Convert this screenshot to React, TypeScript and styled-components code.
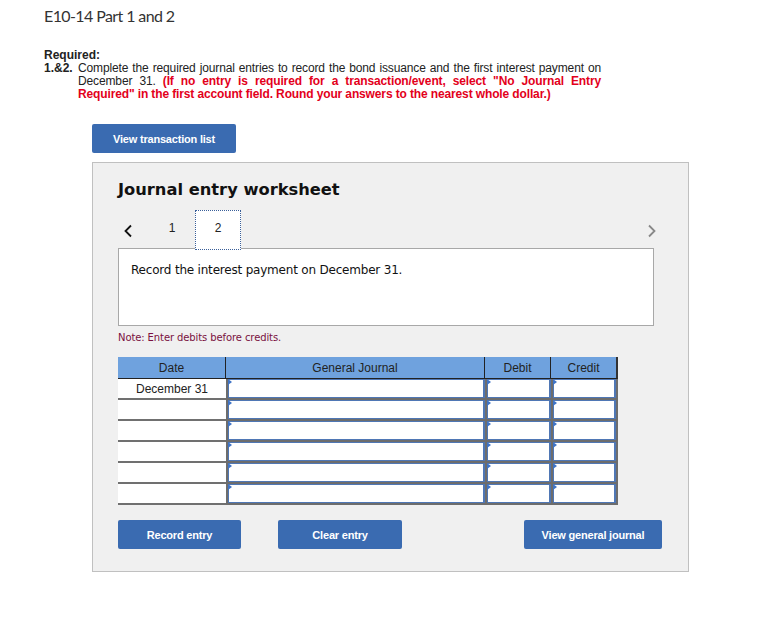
import React from "react";
import styled, { createGlobalStyle } from "styled-components";

const Global = createGlobalStyle`
  html, body { margin: 0; padding: 0; background: #fff; }
  body { font-family: "Liberation Sans", Arial, sans-serif; color: #222; }
  * { box-sizing: border-box; }
`;

const Page = styled.div`
  padding: 6px 0 40px 44px;
  width: 761px;
`;

const Title = styled.h1`
  margin: 0;
  font-family: Lato, "Open Sans", sans-serif;
  font-weight: 400;
  font-size: 16px;
  line-height: 20px;
  color: #333;
  letter-spacing: -0.6px;
`;

const Required = styled.div`
  margin-top: 23px;
  font-size: 12px;
  line-height: 13px;
  width: 557px;
`;

const ReqLabel = styled.div`
  font-weight: 700;
`;

const ReqRow = styled.div`
  display: flex;
`;

const ReqNum = styled.div`
  font-weight: 700;
  width: 34px;
  flex: none;
`;

const ReqText = styled.div`
  text-align: justify;
  flex: 1;
  letter-spacing: -0.13px;
`;

const Red = styled.span`
  color: #e3001b;
  font-weight: 700;
`;

const Btn = styled.button<{ $w: number }>`
  width: ${(p) => p.$w}px;
  height: 29px;
  background: #3a6bb1;
  border: none;
  border-radius: 2px;
  color: #fff;
  font-family: "Liberation Sans", Arial, sans-serif;
  font-weight: 700;
  font-size: 11px;
  letter-spacing: -0.2px;
  padding: 0;
  cursor: pointer;
  display: block;
`;

const TopBtnWrap = styled.div`
  margin: 23px 0 0 48px;
`;

const Panel = styled.div`
  margin: 9px 0 0 48px;
  width: 597px;
  height: 410px;
  background: #f0f0f0;
  border: 1px solid #c0c0c0;
  padding: 17px 35px 0 25px;
`;

const PanelTitle = styled.h2`
  margin: 0;
  font-family: "DejaVu Sans", Verdana, sans-serif;
  font-weight: 700;
  font-size: 16.3px;
  line-height: 20px;
  color: #111;
`;

const Nav = styled.div`
  display: flex;
  align-items: flex-end;
  margin-top: 10px;
  margin-right: -9px;
  height: 40px;
  position: relative;
  z-index: 1;
  margin-bottom: -2px;
`;

const Arrow = styled.div<{ $gray?: boolean }>`
  width: 20px;
  height: 38px;
  display: flex;
  align-items: center;
  justify-content: center;
  color: ${(p) => (p.$gray ? "#888" : "#111")};
`;

const Gap = styled.div<{ $w: number }>`
  width: ${(p) => p.$w}px;
  flex: none;
`;

const TabNum = styled.div<{ $active?: boolean }>`
  width: ${(p) => (p.$active ? 46 : 43)}px;
  height: 40px;
  display: flex;
  align-items: center;
  justify-content: center;
  font-family: "Liberation Sans", Arial, sans-serif;
  font-size: 12px;
  color: #222;
  padding-bottom: 4px;
  padding-right: ${(p) => (p.$active ? 0 : 3)}px;
  background: ${(p) => (p.$active ? "#fff" : "transparent")};
  border: ${(p) => (p.$active ? "1px dotted #3a5f99" : "none")};
`;

const Spacer = styled.div`
  flex: 1;
`;

const ContentBox = styled.div`
  width: 536px;
  height: 78px;
  background: #fff;
  border: 1px solid #a8a8a8;
  padding: 13px 12px;
  font-family: "DejaVu Sans", Verdana, sans-serif;
  font-size: 12px;
  line-height: 16px;
  color: #111;
  letter-spacing: -0.2px;
`;

const Note = styled.div`
  margin-top: 6px;
  font-family: "DejaVu Sans", Verdana, sans-serif;
  font-size: 10px;
  line-height: 12px;
  color: #7a1040;
  letter-spacing: -0.1px;
`;

const Table = styled.div`
  margin-top: 13px;
  display: grid;
  grid-template-columns: 108px 259px 66px 67px;
  width: 500px;
`;

const Head = styled.div<{ $last?: boolean }>`
  height: 22px;
  background: #6fa2de;
  border-bottom: 1px solid #222;
  border-right: ${(p) => (p.$last ? "2px solid #333" : "1px solid #222")};
  display: flex;
  align-items: center;
  justify-content: center;
  font-size: 12px;
  color: #222;
`;

const DateCell = styled.div`
  height: 21px;
  background: #fff;
  border-bottom: 2px solid #707070;
  display: flex;
  align-items: center;
  justify-content: center;
  font-size: 12px;
  color: #222;
`;

const InCell = styled.div<{ $last?: boolean }>`
  height: 21px;
  border-left: 2px solid #6d6d6d;
  border-right: ${(p) => (p.$last ? "2px solid #6d6d6d" : "none")};
  border-bottom: 2px solid #6d6d6d;
  position: relative;
  background: #fff;
`;

const Field = styled.div`
  position: absolute;
  inset: 0;
  border: 2px solid #4f77b5;
  border-top-width: 1px;
  border-left-width: 1px;
  border-bottom-width: 1px;
  background: #fff;
`;

const Marker = styled.span`
  position: absolute;
  left: 0;
  top: 0;
  width: 0;
  height: 0;
  border-top: 3px solid transparent;
  border-bottom: 3px solid transparent;
  border-left: 4px solid #3f74c6;
`;

const BtnRow = styled.div`
  display: flex;
  margin-top: 15px;
  margin-right: -9px;
`;

const GapBtn = styled.div<{ $ml: string }>`
  margin-left: ${(p) => p.$ml};
`;

const Chevron = ({ dir }: { dir: "l" | "r" }) => (
  <svg width="10" height="14" viewBox="0 0 10 14">
    <path
      d={dir === "l" ? "M8 1.5 L2.5 7 L8 12.5" : "M2 1.5 L7.5 7 L2 12.5"}
      fill="none"
      stroke="currentColor"
      strokeWidth="1.8"
    />
  </svg>
);

const rows = ["December 31", "", "", "", "", ""];

export default function App() {
  return (
    <>
      <Global />
      <Page>
        <Title>E10-14 Part 1 and 2</Title>
        <Required>
          <ReqLabel>Required:</ReqLabel>
          <ReqRow>
            <ReqNum>1.&amp;2.</ReqNum>
            <ReqText>
              Complete the required journal entries to record the bond issuance and the first interest payment on
              December 31.{" "}
              <Red>
                (If no entry is required for a transaction/event, select "No Journal Entry Required" in the first
                account field. Round your answers to the nearest whole dollar.)
              </Red>
            </ReqText>
          </ReqRow>
        </Required>
        <TopBtnWrap>
          <Btn $w={144}>View transaction list</Btn>
        </TopBtnWrap>
        <Panel>
          <PanelTitle>Journal entry worksheet</PanelTitle>
          <Nav>
            <Arrow>
              <Chevron dir="l" />
            </Arrow>
            <Gap $w={14} />
            <TabNum>1</TabNum>
            <TabNum $active>2</TabNum>
            <Spacer />
            <Arrow $gray>
              <Chevron dir="r" />
            </Arrow>
          </Nav>
          <ContentBox>Record the interest payment on December 31.</ContentBox>
          <Note>Note: Enter debits before credits.</Note>
          <Table>
            <Head>Date</Head>
            <Head>General Journal</Head>
            <Head>Debit</Head>
            <Head $last>Credit</Head>
            {rows.map((d, i) => (
              <React.Fragment key={i}>
                <DateCell>{d}</DateCell>
                <InCell>
                  <Field />
                  <Marker />
                </InCell>
                <InCell>
                  <Field />
                  <Marker />
                </InCell>
                <InCell $last>
                  <Field />
                  <Marker />
                </InCell>
              </React.Fragment>
            ))}
          </Table>
          <BtnRow>
            <Btn $w={123}>Record entry</Btn>
            <GapBtn $ml="37px">
              <Btn $w={124}>Clear entry</Btn>
            </GapBtn>
            <GapBtn $ml="auto">
              <Btn $w={138}>View general journal</Btn>
            </GapBtn>
          </BtnRow>
        </Panel>
      </Page>
    </>
  );
}
